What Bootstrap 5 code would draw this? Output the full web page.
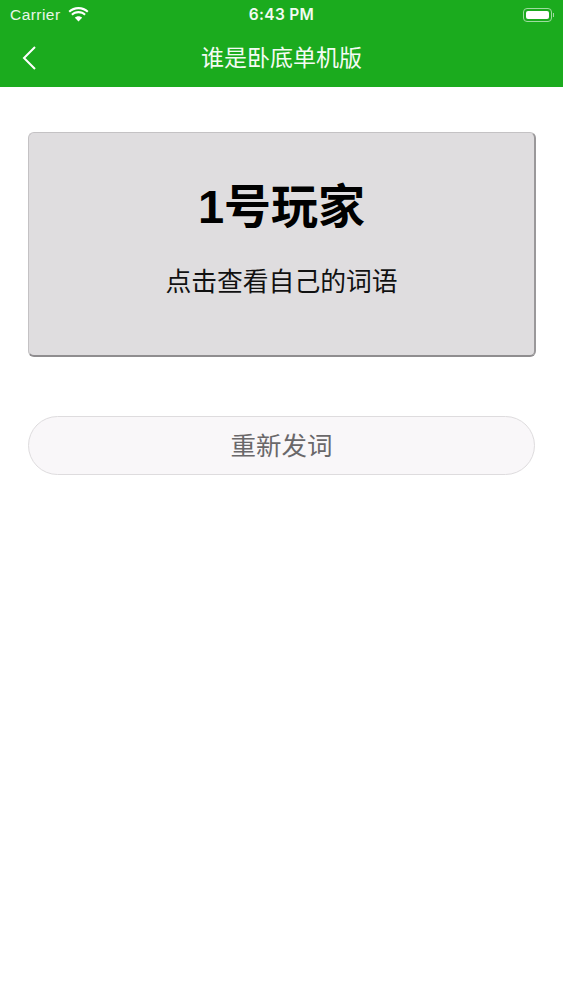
<!DOCTYPE html>
<html lang="zh">
<head>
<meta charset="utf-8">
<title>谁是卧底单机版</title>
<link href="https://cdn.jsdelivr.net/npm/bootstrap@5.3.0/dist/css/bootstrap.min.css" rel="stylesheet">
<style>
html,body{margin:0;background:#fff;font-family:"Liberation Sans","Noto Sans CJK SC",sans-serif;}
.app-bar{background:#1bab1e;height:87px;color:#fff;}
.stat-row{height:29px;padding:0 10px;position:relative;}
.carrier{font-size:15.5px;color:#e8f6e8;letter-spacing:.45px;line-height:29px;margin-right:3px;}
.clock{position:absolute;left:0;right:0;top:0;text-align:center;font-family:"Inter","Liberation Sans",sans-serif;font-size:15.5px;font-weight:600;line-height:29px;letter-spacing:.3px;color:#f2fbf2;}
.batt{width:29px;height:14px;border:1px solid #9fdca0;border-radius:4px;padding:2px;}
.batt-fill{background:#fff;border-radius:2px;height:100%;}
.batt-cap{width:1.5px;height:4px;background:#9fdca0;margin-left:1px;margin-right:-1px;}
.title-row{height:58px;position:relative;}
.back-btn{position:absolute;left:22px;top:17px;line-height:0;}
.nav-title{font-size:23px;line-height:58px;text-align:center;font-weight:400;color:#f4fbf4;}
.page-body{padding:45px 27px 0 28px;}
.reveal-box{height:225px;background:#dfdddf;border-radius:6px;border:1px solid #c4c2c4;border-bottom:2px solid #8f8d8f;border-right:2px solid #9a989a;text-align:center;color:#000;cursor:pointer;}
.player-name{font-size:47px;font-weight:700;line-height:56px;margin:46px 0 0;}
.reveal-hint{font-size:25.8px;line-height:32px;margin:31px 0 0;color:#111;}
.redeal-btn{display:block;width:507px;height:59px;margin-top:59px;background:#f9f7f9;border:1px solid #dedcde;border-radius:30px;font-size:25.5px;line-height:1;color:#6a686a;padding:3px 0 0;}
.redeal-btn:hover{background:#f9f7f9;color:#6a686a;border-color:#dedcde;}
</style>
</head>
<body>
<header class="app-bar">
  <div class="stat-row d-flex align-items-center justify-content-between">
    <div class="d-flex align-items-center gap-1">
      <span class="carrier">Carrier</span>
      <svg width="21" height="15" viewBox="0 0 21 15" fill="#fff"><path d="M10.5 2.2c3.4 0 6.4 1.3 8.6 3.4l1.4-1.6C17.900 1.500 14.400 0 10.500 0S3.100 1.500.5 4l1.400 1.600c2.200-2.100 5.200-3.400 8.600-3.400z"/><path d="M10.500 6.200c2.300 0 4.300.9 5.800 2.300l1.500-1.600c-1.900-1.800-4.500-2.900-7.300-2.900s-5.400 1.100-7.300 2.900l1.500 1.600c1.500-1.400 3.500-2.300 5.800-2.300z"/><path d="M10.500 9.300c-1.400 0-2.700.6-3.600 1.400l3.600 3.800 3.600-3.800c-.9-.8-2.200-1.400-3.600-1.400z"/></svg>
    </div>
    <div class="clock">6:43 PM</div>
    <div class="d-flex align-items-center">
      <div class="batt"><div class="batt-fill"></div></div>
      <div class="batt-cap"></div>
    </div>
  </div>
  <div class="title-row">
    <span class="back-btn"><svg width="14" height="24" viewBox="0 0 14 24" fill="none" stroke="#fff" stroke-width="2"><path d="M13 1 2 12l11 11"/></svg></span>
    <div class="nav-title">谁是卧底单机版</div>
  </div>
</header>
<main class="page-body">
  <div class="reveal-box">
    <h1 class="player-name">1号玩家</h1>
    <p class="reveal-hint">点击查看自己的词语</p>
  </div>
  <button type="button" class="btn redeal-btn">重新发词</button>
</main>
<script src="https://cdn.jsdelivr.net/npm/bootstrap@5.3.0/dist/js/bootstrap.bundle.min.js"></script>
</body>
</html>
